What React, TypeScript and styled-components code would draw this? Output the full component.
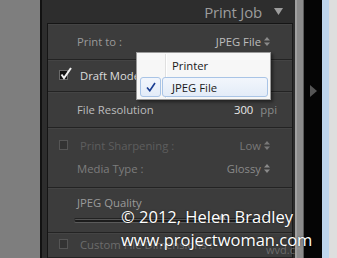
import React from "react";
import styled, { createGlobalStyle } from "styled-components";

const GlobalStyle = createGlobalStyle`
  html, body { margin: 0; padding: 0; background: #7e7e7e; overflow: hidden; }
  * { box-sizing: border-box; }
`;

const Root = styled.div`
  position: relative;
  width: 337px;
  height: 258px;
  display: flex;
  font-family: "Open Sans", "Noto Sans", sans-serif;
  overflow: hidden;
`;

const LeftGutter = styled.div`
  width: 40px;
  background: #7e7e7e;
`;

const Panel = styled.div`
  width: 255px;
  background: #2d2d2d;
  border-left: 2px solid #121212;
  padding: 0 2px 0 5px;
  display: flex;
  flex-direction: column;
`;

const Header = styled.div`
  height: 23px;
  display: flex;
  align-items: center;
  justify-content: flex-end;
  padding-right: 10px;
  gap: 12px;
  color: #9c9c9c;
  font-size: 15px;
  letter-spacing: -0.2px;
`;

const Section = styled.div`
  flex: 1;
  background: #3c3c3c;
  border-left: 1px solid #151515;
  border-top: 1px solid #151515;
  border-right: 1px solid #1a1a1a;
  display: flex;
  flex-direction: column;
`;

const Row = styled.div<{ $h?: number; $pt: number }>`
  ${(p) => (p.$h ? `height: ${p.$h}px;` : "flex: 1;")}
  padding: ${(p) => p.$pt}px 22px 0 29px;
  border-bottom: 1px solid #232323;
  box-shadow: inset 0 1px 0 #444444;
  display: flex;
  flex-direction: column;
  gap: 5px;
`;

const Line = styled.div<{ $indent?: number }>`
  height: 18px;
  display: flex;
  align-items: center;
  justify-content: space-between;
  font-size: 11.3px;
  margin-left: ${(p) => p.$indent ?? 0}px;
`;

const LabelGroup = styled.div`
  display: flex;
  align-items: center;
  gap: 12px;
`;

const Label = styled.span<{ $c: string }>`
  color: ${(p) => p.$c};
  white-space: nowrap;
`;

const Value = styled.span<{ $c: string }>`
  color: ${(p) => p.$c};
  display: flex;
  align-items: center;
  gap: 3px;
  white-space: nowrap;
`;

const Unit = styled.span`
  color: #8a8a8a;
  margin-left: 4px;
`;

const Box = styled.span<{ $dim?: boolean }>`
  position: relative;
  width: 9px;
  height: 10px;
  background: ${(p) => (p.$dim ? "#333" : "#111")};
  border: 1px solid ${(p) => (p.$dim ? "#555" : "#6a6a6a")};
  flex: none;
`;

const BoxTick = styled.svg`
  position: absolute;
  left: 0px;
  top: -5px;
`;

const SliderTrack = styled.div`
  position: relative;
  margin: 2px 0 0 -3px;
  height: 4px;
  width: 196px;
  border-radius: 2px;
  background: #1c1c1c;
  border-top: 1px solid #222;
  box-shadow: 0 1px 0 #5a5a5a, inset 0 1px 0 #555;
`;

const Knob = styled.svg`
  position: absolute;
  left: 144px;
  top: -6px;
`;

const Scrollbar = styled.div`
  width: 9px;
  background: #8b8b8b;
  border-left: 2px solid #a0a0a0;
  border-right: 1px solid #5a5a5a;
`;

const BlackStrip = styled.div`
  width: 18px;
  background: #050505;
  display: flex;
  justify-content: center;
  padding-top: 85px;
`;

const BlueStripe = styled.div`
  width: 7px;
  background: #bed5ec;
`;

const RightGray = styled.div`
  width: 8px;
  background: #dedede;
`;

const Menu = styled.div`
  position: absolute;
  left: 136px;
  top: 52px;
  width: 135px;
  height: 48px;
  background: #f7f7f7;
  border: 1px solid #9a9a9a;
  box-shadow: 2px 2px 3px rgba(0, 0, 0, 0.45);
  padding: 2px 2px 0 3px;
  display: flex;
  flex-direction: column;
  gap: 2px;
  font-family: "Open Sans", "Noto Sans", sans-serif;
  font-size: 11.3px;
  color: #1a1a1a;
`;

const MenuSep = styled.div`
  position: absolute;
  left: 28px;
  top: 1px;
  bottom: 1px;
  width: 2px;
  border-left: 1px solid #e0e0e0;
  border-right: 1px solid #ffffff;
`;

const MenuItem = styled.div<{ $active?: boolean }>`
  position: relative;
  height: 20px;
  display: grid;
  grid-template-columns: 21px 1fr;
  gap: 1px;
`;

const MenuCell = styled.div<{ $active?: boolean; $text?: boolean }>`
  display: flex;
  align-items: center;
  justify-content: ${(p) => (p.$text ? "flex-start" : "center")};
  padding-left: ${(p) => (p.$text ? "9px" : "0")};
  border-radius: 3px;
  ${(p) =>
    p.$active
      ? `background: linear-gradient(#f2f6fc, #e3ecf8); border: 1px solid #a9c4e6;`
      : `border: 1px solid transparent;`}
`;

const Watermark = styled.div`
  position: absolute;
  left: 121px;
  top: 205px;
  color: #ffffff;
  font-family: "Open Sans", "Noto Sans", sans-serif;
  font-size: 16.5px;
  line-height: 23px;
  text-shadow: 0 0 2px rgba(0, 0, 0, 0.6);
  white-space: nowrap;
`;

const Faint = styled.div`
  position: absolute;
  left: 266px;
  top: 242px;
  color: rgba(150, 150, 150, 0.55);
  font-family: "Open Sans", sans-serif;
  font-size: 11px;
`;

const UpDown = () => (
  <svg width="6" height="9" viewBox="0 0 6 9">
    <path d="M3 0 L6 3.5 L0 3.5 Z M0 5.5 L6 5.5 L3 9 Z" fill="currentColor" />
  </svg>
);

const Check = ({ dim }: { dim?: boolean }) => (
  <Box $dim={dim}>
    {!dim && (
      <BoxTick width="14" height="14" viewBox="0 0 14 14">
        <path d="M1.5 8.5 L4 12 L11 2" stroke="#f2f2f2" strokeWidth="2" fill="none" />
      </BoxTick>
    )}
  </Box>
);

export default function App() {
  return (
    <>
      <GlobalStyle />
      <Root>
        <LeftGutter />
        <Panel>
          <Header>
            <span>Print Job</span>
            <svg width="9" height="7" viewBox="0 0 9 7">
              <path d="M0 0 L9 0 L4.5 7 Z" fill="#9c9c9c" />
            </svg>
          </Header>
          <Section>
            <Row $h={36} $pt={8}>
              <Line>
                <Label $c="#9a9a9a">Print to :</Label>
                <Value $c="#bdbdbd">
                  JPEG File <Label $c="#8a8a8a"><UpDown /></Label>
                </Value>
              </Line>
            </Row>
            <Row $h={32} $pt={6}>
              <Line $indent={-18}>
                <LabelGroup>
                  <Check />
                  <Label $c="#dcdcdc">Draft Mode Printing</Label>
                </LabelGroup>
              </Line>
            </Row>
            <Row $h={36} $pt={8}>
              <Line>
                <Label $c="#bdbdbd">File Resolution</Label>
                <Value $c="#e8e8e8" style={{ marginRight: -7 }}>
                  300<Unit>ppi</Unit>
                </Value>
              </Line>
            </Row>
            <Row $h={60} $pt={8}>
              <Line $indent={-18}>
                <LabelGroup>
                  <Check dim />
                  <Label $c="#5e5e5e">Print Sharpening :</Label>
                </LabelGroup>
                <Value $c="#787878">
                  Low <UpDown />
                </Value>
              </Line>
              <Line>
                <Label $c="#7c7c7c">Media Type :</Label>
                <Value $c="#8a8a8a">
                  Glossy <UpDown />
                </Value>
              </Line>
            </Row>
            <Row $h={45} $pt={5}>
              <Line>
                <Label $c="#9a9a9a">JPEG Quality</Label>
              </Line>
              <SliderTrack>
                <Knob width="8" height="8" viewBox="0 0 8 8">
                  <path d="M4 0 L8 7 L0 7 Z" fill="#8c8c8c" />
                </Knob>
              </SliderTrack>
            </Row>
            <Row $pt={2}>
              <Line $indent={-18}>
                <LabelGroup>
                  <Check dim />
                  <Label $c="#6c6c6c">Custom File Dimensions :</Label>
                </LabelGroup>
              </Line>
            </Row>
          </Section>
        </Panel>
        <Scrollbar />
        <BlackStrip>
          <svg width="7" height="12" viewBox="0 0 7 12">
            <path d="M0 0 L7 6 L0 12 Z" fill="#555555" />
          </svg>
        </BlackStrip>
        <BlueStripe />
        <RightGray />

        <Menu>
          <MenuSep />
          <MenuItem>
            <MenuCell />
            <MenuCell $text>Printer</MenuCell>
          </MenuItem>
          <MenuItem $active>
            <MenuCell $active>
              <svg width="10" height="10" viewBox="0 0 10 10">
                <path d="M1 5.5 L3.8 8.8 L9 1" stroke="#1b3e92" strokeWidth="1.6" fill="none" />
              </svg>
            </MenuCell>
            <MenuCell $active $text>JPEG File</MenuCell>
          </MenuItem>
        </Menu>

        <Watermark>
          © 2012, Helen Bradley
          <br />
          www.projectwoman.com
        </Watermark>
        <Faint>wvd.cn</Faint>
      </Root>
    </>
  );
}
